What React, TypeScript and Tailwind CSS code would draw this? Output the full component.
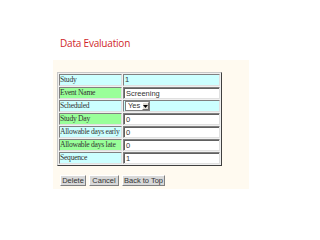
import React from "react";

const rows: { label: string; bg: string; kind: "text" | "input" | "select"; value: string }[] = [
  { label: "Study", bg: "bg-[#ccffff]", kind: "text", value: "1" },
  { label: "Event Name", bg: "bg-[#99ff99]", kind: "input", value: "Screening" },
  { label: "Scheduled", bg: "bg-[#ccffff]", kind: "select", value: "Yes" },
  { label: "Study Day", bg: "bg-[#99ff99]", kind: "input", value: "0" },
  { label: "Allowable days early", bg: "bg-[#ccffff]", kind: "input", value: "0" },
  { label: "Allowable days late", bg: "bg-[#99ff99]", kind: "input", value: "0" },
  { label: "Sequence", bg: "bg-[#ccffff]", kind: "input", value: "1" },
];

export default function App() {
  return (
    <div className="w-[320px] h-[240px] bg-white flex flex-col overflow-hidden">
      <div
        className="ml-[60px] mt-[36px] text-[10px] leading-[14px] font-medium text-[#d01f2a]"
        style={{ fontFamily: '"Open Sans", "Liberation Sans", sans-serif', letterSpacing: "-0.2px" }}
      >
        Data Evaluation
      </div>
      <div className="ml-[53px] mt-[10px] w-[196px] h-[129px] bg-[#fffaf0] flex flex-col pl-[4px] pt-[12px]">
        <div className="w-[165px] border border-t-[#c8c8c8] border-l-[#c8c8c8] border-r-[#404040] border-b-[#404040] p-[1px] flex flex-col gap-[1px] bg-[#f0f0f0]">
          {rows.map((r) => (
            <div key={r.label} className="flex gap-[1px] h-[12px]">
              <div
                className={`w-[63px] ${r.bg} border border-t-[#808080] border-l-[#808080] border-r-[#e0e0e0] border-b-[#e0e0e0] text-[7.6px] leading-[10px] whitespace-nowrap overflow-hidden text-[#333]`}
                style={{ fontFamily: '"Liberation Serif", serif', letterSpacing: "-0.25px" }}
              >
                {r.label}
              </div>
              <div
                className={`flex-1 border border-t-[#808080] border-l-[#808080] border-r-[#e0e0e0] border-b-[#e0e0e0] ${r.kind === "input" ? "bg-white" : "bg-[#ccffff]"} flex items-center`}
                style={{ fontFamily: '"Liberation Sans", sans-serif' }}
              >
                {r.kind === "text" && (
                  <span className="text-[7.5px] leading-[10px] pl-[1px] text-[#333]">{r.value}</span>
                )}
                {r.kind === "input" && (
                  <div className="w-full h-full border-t border-l border-t-[#606060] border-l-[#606060] bg-white text-[7.5px] leading-[9px] pl-[1px] text-[#333]">
                    {r.value}
                  </div>
                )}
                {r.kind === "select" && (
                  <div className="ml-[1px] w-[25px] h-[10px] bg-white border border-[#808080] flex items-center justify-between text-[7.5px] leading-[8px] text-[#333]">
                    <span className="pl-[2px]">{r.value}</span>
                    <span className="w-[7px] h-[8px] bg-[#e0ddd6] border border-t-white border-l-white border-r-[#707070] border-b-[#707070] flex items-center justify-center">
                      <svg width="5" height="3" viewBox="0 0 5 3">
                        <path d="M0 0h5L2.5 3z" fill="#000" />
                      </svg>
                    </span>
                  </div>
                )}
              </div>
            </div>
          ))}
        </div>
        <div
          className="flex gap-[3px] mt-[9px] ml-[3px] text-[7.5px] leading-[9px] text-[#333]"
          style={{ fontFamily: '"Liberation Sans", sans-serif' }}
        >
          <div className="w-[26px] h-[11px] bg-[#d8d8d8] border border-t-white border-l-white border-r-[#808080] border-b-[#808080] flex items-center justify-center">Delete</div>
          <div className="w-[30px] h-[11px] bg-[#d8d8d8] border border-t-white border-l-white border-r-[#808080] border-b-[#808080] flex items-center justify-center">Cancel</div>
          <div className="w-[43px] h-[11px] bg-[#d8d8d8] border border-t-white border-l-white border-r-[#808080] border-b-[#808080] flex items-center justify-center whitespace-nowrap">Back to Top</div>
        </div>
      </div>
    </div>
  );
}
